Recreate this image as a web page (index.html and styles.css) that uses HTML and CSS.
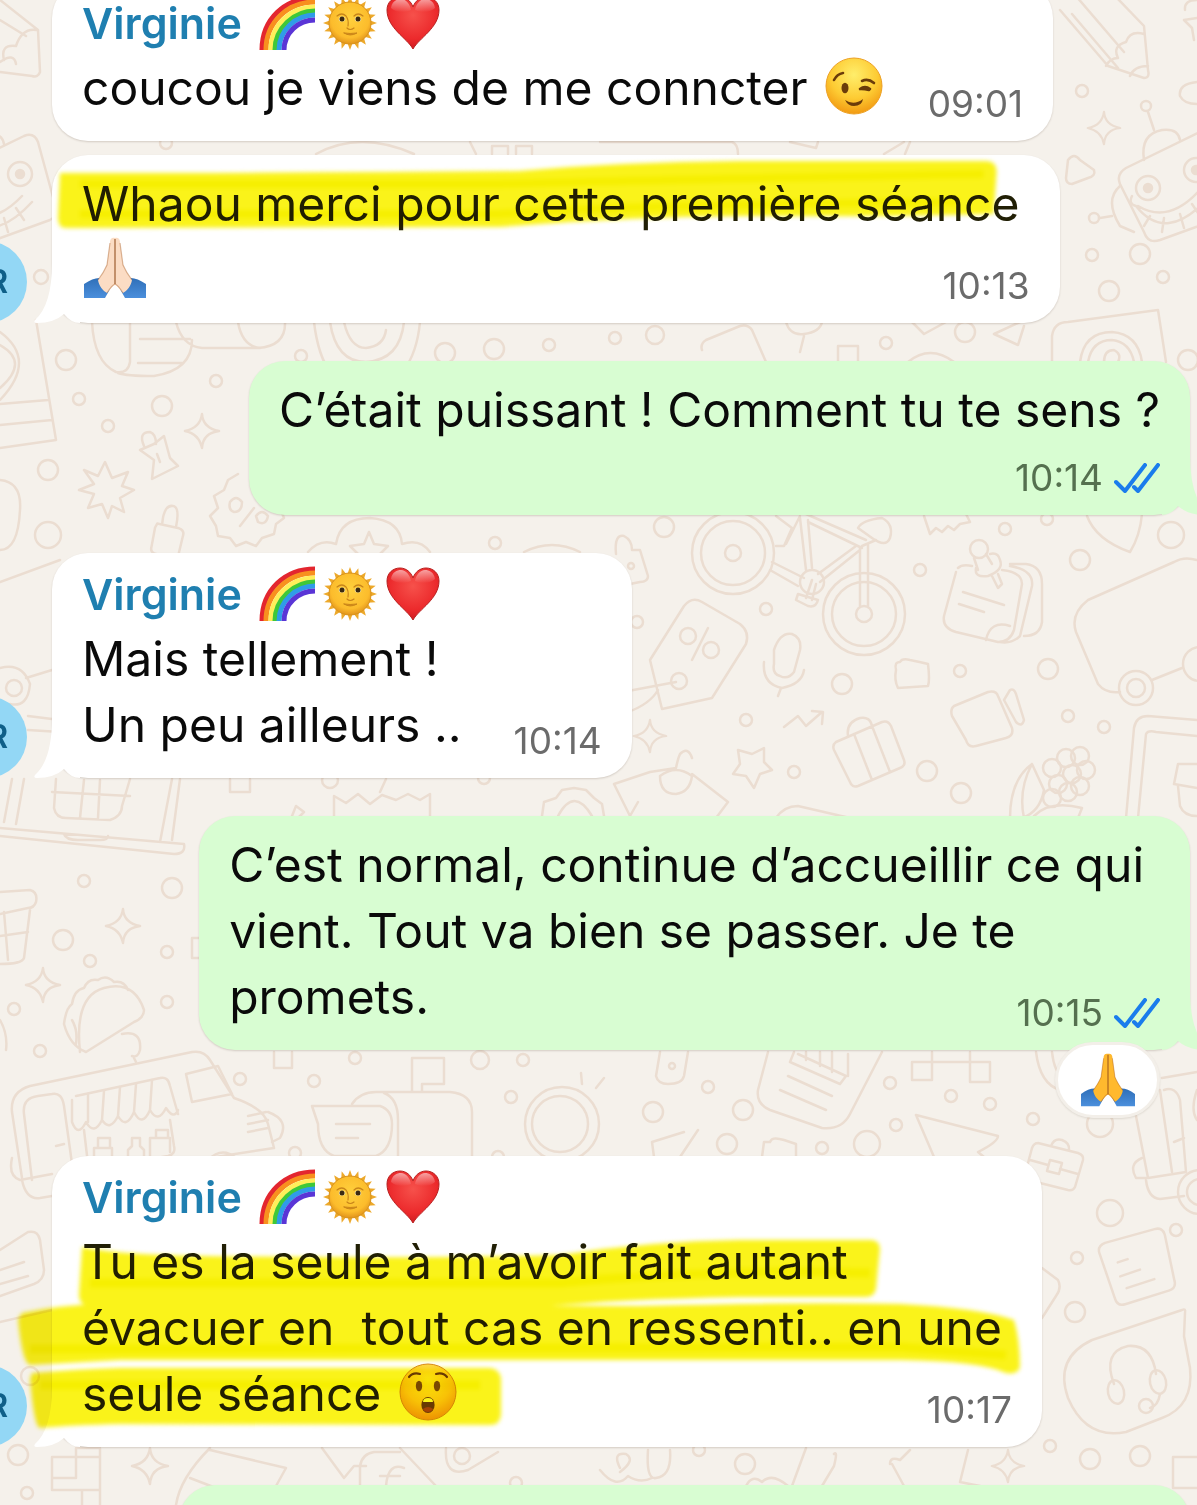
FILE: index.html
```html
<!DOCTYPE html>
<html lang="fr">
<head>
  <meta charset="UTF-8" />
  <meta name="viewport" content="width=device-width, initial-scale=1.0" />
  <title>Virginie</title>
  <link rel="stylesheet" href="styles.css">
</head>
<body>
  <!-- shared emoji and icons -->
  <svg class="sprite" width="0" height="0" aria-hidden="true">
    <defs>
      <radialGradient id="faceFill" cx="50%" cy="30%" r="70%">
        <stop offset="0" stop-color="#ffee6b" /><stop offset=".6" stop-color="#fdcb33" /><stop offset="1" stop-color="#f29a12" />
      </radialGradient>
      <radialGradient id="sunFill" cx="50%" cy="40%" r="60%">
        <stop offset="0" stop-color="#ffd13d" /><stop offset=".75" stop-color="#fcbc2c" /><stop offset="1" stop-color="#e2941c" />
      </radialGradient>
      <radialGradient id="heartFill" cx="50%" cy="35%" r="65%">
        <stop offset="0" stop-color="#f6514b" /><stop offset=".7" stop-color="#ec2a2c" /><stop offset="1" stop-color="#cf1a20" />
      </radialGradient>
      <linearGradient id="heartShine" x1="0" y1="0" x2="0" y2="1">
        <stop offset="0" stop-color="#fff" stop-opacity=".55" /><stop offset="1" stop-color="#fff" stop-opacity="0" />
      </linearGradient>
      <linearGradient id="sleeve" x1="0" y1="0" x2="0" y2="1">
        <stop offset="0" stop-color="#2f6fb8" /><stop offset="1" stop-color="#4b8fdc" />
      </linearGradient>
      <symbol id="rainbow" viewBox="0 0 56 56">
        <g fill="none" stroke-width="5">
          <path d="M3 55C3 24 26 3 56 3" stroke="#e3262f" />
          <path d="M7 55C7 27 29 7 56 7" stroke="#f8901e" />
          <path d="M12 55C12 30 32 12 56 12" stroke="#ffef5a" />
          <path d="M16 55C16 33 35 16 56 16" stroke="#3fc838" />
          <path d="M20 55C20 35 37 20 56 20" stroke="#2f9ce8" />
          <path d="M25 55C25 38 39 25 56 25" stroke="#5a35d6" />
        </g>
      </symbol>
      <symbol id="sun" viewBox="-28 -28 56 56">
        <g fill="#eda92b">
          <path id="ray" d="M0-27 3-19 19-3 27 0 19 3 3 19 0 27-3 19-19 3-27 0-19-3-3-19Z" />
          <use href="#ray" transform="rotate(18)" /><use href="#ray" transform="rotate(36)" />
          <use href="#ray" transform="rotate(54)" /><use href="#ray" transform="rotate(72)" />
        </g>
        <circle r="21" fill="url(#sunFill)" stroke="#d8921c" />
        <g fill="none" stroke="#c9851a" stroke-linecap="round">
          <path d="M-13-7Q-8-11-4-7Q-1-3-2 3M13-7Q8-11 4-7M-3 5Q0 8 4 5" stroke-width="1.2" />
          <path d="M-6 10Q0 14 7 10Q0 11-6 10" fill="#d98c14" />
        </g>
        <ellipse cx="-8" cy="-4" rx="3.2" ry="2.6" fill="#fff0b5" /><ellipse cx="8" cy="-4" rx="3.2" ry="2.6" fill="#fff0b5" />
        <circle cx="-8" cy="-4" r="2.5" fill="#3b2a12" /><circle cx="8" cy="-4" r="2.5" fill="#3b2a12" />
      </symbol>
      <symbol id="heart" viewBox="0 0 56 56">
        <path d="M28 54C22 43 2 33 2 15C2 7 8 2 15 2C21 2 26 6 28 12C30 6 35 2 41 2C48 2 54 7 54 15C54 33 34 43 28 54Z" fill="url(#heartFill)" stroke="#b8201f" />
        <path d="M6 13C7 6 12 4 16 4C21 4 25 9 26 15C20 18 11 18 6 13ZM30 15C31 9 35 4 40 4C44 4 49 6 50 13C45 18 36 18 30 15Z" fill="url(#heartShine)" />
      </symbol>
      <symbol id="pray" viewBox="0 0 62 62">
        <path d="M0 47Q10 40 17 41L26 52L21 61H0ZM62 47Q52 40 45 41L36 52L41 61H62Z" fill="url(#sleeve)" />
        <path d="M31 1C28 0 26 2 26 5L23 27C21 33 17 38 14 43C15 49 19 54 23 56L28 50Q31 46 34 50L39 56C43 54 47 49 48 43C45 38 41 33 39 27L36 5C36 2 34 0 31 1Z" fill="currentColor" />
        <path d="M31 2V47" fill="none" stroke="#8f4a1a" stroke-opacity=".65" stroke-width="1.6" />
        <path d="M26 6L23 28Q20 35 14 43M36 6L39 28Q42 35 48 43M31 47Q28 48 23 56M31 47Q34 48 39 56" fill="none" stroke="#a45a22" stroke-opacity=".4" stroke-width="1.2" />
      </symbol>
      <symbol id="wink" viewBox="0 0 58 58">
        <circle cx="29" cy="29" r="28" fill="url(#faceFill)" stroke="#eda125" />
        <ellipse cx="20" cy="31" rx="3.5" ry="5.2" fill="#6b3c0a" />
        <g fill="none" stroke="#6b3c0a" stroke-width="2.6" stroke-linecap="round">
          <path d="M9 23Q12 17 18 16M37 24Q43 21 49 26M35 32Q40 28 45 32M36 32Q40 32 44 33" />
        </g>
        <path d="M20 43Q29 49 38 42Q37 49 29 49Q23 49 20 43Z" fill="#6b3c0a" />
      </symbol>
      <symbol id="wow" viewBox="0 0 58 58">
        <circle cx="29" cy="29" r="28" fill="url(#faceFill)" stroke="#d98c18" />
        <ellipse cx="20" cy="23" rx="3.2" ry="5.2" fill="#7d4c0c" /><ellipse cx="38" cy="23" rx="3.2" ry="5.2" fill="#7d4c0c" />
        <path d="M10 14Q14 9 21 11M48 14Q44 9 37 11" fill="none" stroke="#6b3c0a" stroke-width="2.2" stroke-linecap="round" />
        <ellipse cx="29" cy="42" rx="6.6" ry="8" fill="#6b3c0a" />
        <path d="M24 39Q24 35 29 35Q34 35 34 39Z" fill="#fff" /><path d="M24 46Q29 42 34 46Q33 49 29 49Q25 49 24 46Z" fill="#a8452c" />
      </symbol>
      <symbol id="checks" viewBox="0 0 46 30">
        <path d="M2 19L11 28L31 2M20 24L24 28L44 2" fill="none" stroke="#1a7cec" stroke-width="4" stroke-linecap="round" stroke-linejoin="round" />
      </symbol>
      <symbol id="tailLeft" viewBox="0 0 46 60">
        <path d="M18 0Q18 42 1 57Q-1 60 3 60Q20 60 30 51Q37 60 46 60V0Z" fill="currentColor" />
      </symbol>
      <symbol id="tailRight" viewBox="0 0 46 60">
        <path d="M28 0Q28 42 45 57Q47 60 43 60Q26 60 16 51Q9 60 0 60V0Z" fill="currentColor" />
      </symbol>

      <!-- wallpaper doodles -->
      <symbol id="spark" viewBox="0 0 40 40"><path d="M20 2Q21 17 38 20Q21 22 20 38Q17 23 2 20Q18 17 20 2Z" /></symbol>
      <g id="robot">
        <path d="M12 60L86 24Q96 20 100 30L118 96Q120 104 112 108L46 132Q34 136 30 124L6 76Q2 66 12 60Z" />
        <path d="M30 52Q26 26 48 22Q64 20 66 32M40 22L34 4" /><circle cx="32" cy="-2" r="5" />
        <circle cx="34" cy="80" r="12" /><circle cx="34" cy="80" r="4" fill="#ebddd1" /><circle cx="82" cy="62" r="12" /><circle cx="82" cy="62" r="4" fill="#ebddd1" />
        <path d="M18 88Q14 96 22 98Q52 136 94 90M24 98Q54 116 84 84M36 108L30 118M50 110L48 124M66 106L70 120M78 96L86 108M6 78Q-10 92 6 118L20 124M-2 108L-14 110" />
        <circle cx="-20" cy="110" r="5" /><circle cx="26" cy="146" r="10" />
      </g>
      <g id="pencil">
        <path d="M0 10L48 66L84 78Q90 78 88 70L84 26L30-30M16-4L64 52M46 66Q50 58 58 58Q52 46 66 42Q70 30 84 34M12 14L58 68M70 76Q74 66 88 66" />
      </g>
      <g id="headset">
        <path d="M30 22L120-8Q124-10 123-5L122 18L128 50Q132 88 100 100L64 114Q24 122 6 80Q-8 40 30 22Z" />
        <path d="M52 66Q40 34 66 28Q90 26 94 56M98 76Q96 88 88 90" />
        <ellipse cx="54" cy="74" rx="8" ry="12" transform="rotate(-12 54 74)" /><ellipse cx="96" cy="64" rx="8" ry="12" transform="rotate(-12 96 64)" /><circle cx="84" cy="88" r="7" />
      </g>
      <g id="van">
        <path d="M10 138L0 72Q-2 52 18 46L180 12Q192 10 198 20L222 58Q252 68 256 84L262 108L80 136M20 140L12 74Q10 58 26 56L40 54Q50 52 52 66L62 138M64 56L148 38Q156 36 158 46L166 74M72 90L76 124Q78 130 86 128L156 116Q164 114 162 106L158 80" />
        <path d="M60 60L60 82Q66 98 74 82Q82 96 90 80Q98 92 106 76Q114 90 122 72Q130 88 138 70Q146 84 154 68Q162 80 166 70M76 54L76 82M92 51L90 80M108 47L106 76M124 44L122 72M140 40L138 70" />
        <path d="M174 34L206 26L220 54Q200 58 180 62ZM256 72Q278 80 268 98L260 102M236 76L254 72M236 84L256 80M236 92L256 88M82 124V108H100V124ZM86 108V98H98V108M116 120V110L120 106V98H128V106L132 110V118M138 116V98H158V112M144 98V90H156V98M44 106L52 104M196 120Q210 106 224 118" />
      </g>
      <g id="bag"><path d="M4 24L50 4Q56 2 59 8L72 42Q74 48 68 50L26 68Q20 70 18 64L2 32Q0 27 4 24ZM16 18Q14 4 28 0Q38-2 40 8M22 16L40 62M40 8L58 54" /></g>
      <g id="card"><path d="M8 6L58-6Q66-8 68 0L76 46Q78 54 70 56L26 68Q18 70 16 62L2 16Q0 9 8 6ZM20 26L30 23M22 40L42 34M28 52L56 44" /></g>
      <g id="lock"><path d="M4 18L26 22Q32 24 30 30L26 50Q24 54 18 52L2 48Q-2 46-1 42L2 22ZM9 18Q10-2 20 0Q26 2 23 20" /></g>
    </defs>
  </svg>

  <main class="chat">
    <svg class="wallpaper" viewBox="0 0 1197 1505" preserveAspectRatio="xMinYMin slice" aria-hidden="true">
      <g fill="none" stroke="#ebddd1" stroke-width="2.5" stroke-linecap="round" stroke-linejoin="round">
        <!-- upper left -->
        <path d="M0 0L38 30L40 72Q38 78 32 76L0 72M0 20L26 36M0 62Q14 52 16 64M4 60Q0 44 16 46Q22 28 36 30" />
        <use href="#robot" x="-62" y="112" />
        <circle cx="41" cy="277" r="7" /><circle cx="66" cy="360" r="10" /><circle cx="79" cy="399" r="6" /><circle cx="162" cy="406" r="10" />
        <circle cx="216" cy="381" r="6" /><circle cx="108" cy="426" r="6" /><circle cx="48" cy="470" r="10" /><circle cx="48" cy="535" r="13" />
        <path d="M0 448L56 440L36 320M0 404L48 400M0 425L52 420M0 345Q30 362 0 388M0 332Q38 360 0 400M0 480Q22 482 20 510Q18 550 0 550M0 582L60 560" />
        <path d="M92 322H130V362Q128 374 116 372Q94 362 92 322ZM140 339H190M138 363H182M118 373Q126 376 154 376Q192 370 192 340M176 322Q182 346 202 348H258Q286 346 285 322M238 322Q242 346 260 348M314 322Q322 390 366 392Q414 384 420 322M330 322Q336 362 366 362Q400 360 404 322M344 322Q350 348 366 348Q384 346 386 330" />
        <use href="#spark" x="182" y="412" width="40" height="38" />
        <path d="M140 450L154 444L164 436L170 458L178 466L152 479L154 460ZM144 446Q138 432 150 432Q156 434 156 444M157 454L160 462" />
        <path d="M105 462L112 478L128 472L122 486L134 490L120 498L124 512L112 506L108 518L102 504L88 508L94 494L79 490L94 484L84 470L98 476Z" />
        <use href="#lock" x="153" y="506" transform="rotate(2 170 530)" />
        <path d="M238 474L228 480L224 490L214 496L218 508L210 516L216 526L218 536L230 538L236 546L246 542L256 546L262 538L274 534L276 524L284 518L280 508M230 502Q236 494 242 502Q242 512 234 512Q228 510 230 502M254 508L240 526M256 516Q262 508 268 516Q266 526 258 522Z" />
        <path d="M308 552Q320 538 336 544Q340 518 370 518Q400 520 402 544Q420 538 430 552M369 532L374 544L388 546L378 556M369 532L364 544L350 546L360 556M524 552Q552 538 580 552" />
        <circle cx="495" cy="543" r="6" /><circle cx="445" cy="353" r="10" /><circle cx="494" cy="349" r="10" /><circle cx="549" cy="345" r="6" /><circle cx="301" cy="356" r="6" /><circle cx="615" cy="338" r="6" /><circle cx="655" cy="335" r="9" />
        <path d="M52 670L26 678M0 668Q22 662 30 684Q28 708 10 704" /><circle cx="14" cy="688" r="8" />
        <path d="M28 716L60 720M28 730L60 732" />

        <!-- between the first bubbles -->
        <circle cx="166" cy="143" r="6" /><path d="M316 154Q360 130 414 154M470 142L476 154M492 154V146H508V154M516 154V146H532V154M600 142H732Q738 144 738 154M790 142L816 148L818 142M884 154L904 142M905 154L910 142" />

        <!-- upper right -->
        <use href="#pencil" x="1060" y="0" />
        <path d="M1197 18L1184 20L1192 28L1194 40M1185 10Q1184 0 1197 0M1197 82Q1178 84 1180 96Q1184 104 1197 104" />
        <circle cx="1082" cy="91" r="6" /><use href="#spark" x="1086" y="110" width="36" height="36" />
        <path d="M1068 160Q1074 152 1080 160L1094 170Q1096 176 1088 178L1072 184Q1066 184 1066 178Z" />
        <use href="#robot" x="1114" y="108" />
        <circle cx="1092" cy="255" r="6" /><circle cx="1109" cy="291" r="10" /><circle cx="1163" cy="277" r="6" />
        <path d="M702 350Q700 344 706 340L740 326Q748 324 752 330L766 362M786 322Q790 336 804 334Q820 332 822 322M804 336L800 352M838 362V346H858V362M908 362Q930 344 954 362M912 322L924 334L946 322M994 334L1020 322M994 334L1018 345L1024 326M1052 362V336Q1054 322 1068 322L1158 310L1166 362M1080 362Q1084 332 1112 332Q1138 334 1142 362M1088 362Q1092 340 1112 340Q1130 342 1134 362M1104 362Q1104 350 1114 350Q1122 354 1118 362" />
        <circle cx="886" cy="343" r="6" /><circle cx="965" cy="332" r="10" /><circle cx="1188" cy="360" r="10" />

        <!-- bicycle -->
        <circle cx="733" cy="553" r="41" /><circle cx="733" cy="553" r="32" /><circle cx="733" cy="553" r="8" />
        <circle cx="864" cy="614" r="41" /><circle cx="864" cy="614" r="32" /><circle cx="864" cy="614" r="8" />
        <path d="M772 562L804 578M770 570L798 586M800 518L806 570M808 520L812 568M808 522L862 548M806 514L866 540M860 550L820 582M856 546L818 574M860 548V606M868 544V606M862 546L876 540M800 516L786 544M776 516L792 528L784 546H776M858 528Q862 520 882 518Q894 524 890 538Q886 548 872 538Z" />
        <circle cx="812" cy="582" r="12" /><path d="M812 580L806 598M816 584L812 600M798 594L818 600Q816 608 808 606L796 600Z" />
        <!-- tag -->
        <path d="M684 606Q692 596 702 602L740 624Q750 632 746 644L712 698L662 709L650 660ZM708 628L692 660M628 691L676 682M628 712Q650 704 658 690" />
        <circle cx="688" cy="636" r="8" /><circle cx="711" cy="650" r="8" /><circle cx="679" cy="681" r="8" />
        <path d="M774 650Q780 632 792 634Q802 638 800 650L794 672Q788 680 780 676Q772 674 774 664ZM764 662Q762 684 782 688Q802 684 804 670M781 688L778 696" />
        <path d="M616 554Q614 534 624 536Q632 540 632 550L640 550L648 576Q648 582 640 582L630 584" />
        <circle cx="631" cy="566" r="3" /><circle cx="664" cy="527" r="10" /><circle cx="637" cy="622" r="6" /><circle cx="766" cy="609" r="6" /><circle cx="842" cy="684" r="10" /><circle cx="746" cy="720" r="6" />
        <circle cx="920" cy="570" r="6" /><circle cx="1005" cy="529" r="6" /><circle cx="1047" cy="519" r="6" /><circle cx="1080" cy="560" r="10" /><circle cx="1171" cy="535" r="13" />
        <circle cx="960" cy="671" r="6" /><circle cx="1048" cy="669" r="10" /><circle cx="1068" cy="716" r="6" /><circle cx="1104" cy="727" r="6" />
        <path d="M924 516L930 534L936 528L942 532L948 526L954 530L960 524L970 522L966 514M1087 516Q1096 540 1130 552Q1140 536 1142 514" />
        <!-- notes with pin -->
        <path d="M958 568Q962 564 972 566M1002 570Q1022 572 1022 584L1014 630Q1010 642 998 642L956 632Q942 628 944 616L956 572M1010 566Q1034 570 1032 586L1020 636Q1012 644 1000 642M1010 564H1026Q1042 566 1042 584V622Q1040 636 1024 636M963 592L1004 605M959 604L984 612M986 640Q990 620 1010 626" />
        <circle cx="979" cy="549" r="9" /><path d="M974 558L978 570M986 554L992 564M976 568Q974 578 988 576Q1004 570 1000 560Q998 552 990 554M992 576L998 588L1002 584L998 574" />
        <path d="M896 670Q894 662 900 662Q902 658 910 660Q920 662 928 664Q930 680 928 686L898 688Q894 680 896 670Z" />
        <path d="M954 706L988 692Q996 690 998 696L1012 728Q1014 736 1006 738L976 746Q968 748 966 740L952 716Q950 709 954 706ZM1004 700L1010 690Q1014 688 1016 694L1024 720Q1022 728 1016 722Z" />
        <use href="#bag" x="832" y="718" />
        <path d="M784 727L798 716L806 726L822 712M812 711L823 712L822 724" />
        <use href="#spark" x="632" y="718" width="36" height="36" />
        <path d="M738 750L752 754L764 748L764 762L772 770L760 774L754 788L746 776L733 774L740 764Z" />
        <circle cx="794" cy="772" r="6" /><circle cx="927" cy="771" r="10" /><circle cx="961" cy="793" r="10" />
        <path d="M614 784L650 772L676 768Q678 758 680 754Q688 746 692 758M692 774L728 802L716 818M614 784L630 816L638 802M660 776Q660 794 676 794Q690 792 692 776Q676 764 660 776M776 818Q784 806 798 806L850 818" />
        <!-- corn -->
        <path d="M1010 818Q1010 780 1032 764L1044 790Q1040 812 1022 818M1032 764Q1018 790 1024 818M1034 816Q1050 800 1082 808L1078 818" />
        <g><circle cx="1052" cy="768" r="9" /><circle cx="1066" cy="758" r="9" /><circle cx="1080" cy="756" r="9" /><circle cx="1058" cy="784" r="9" /><circle cx="1072" cy="774" r="9" /><circle cx="1086" cy="770" r="9" /><circle cx="1052" cy="798" r="9" /><circle cx="1068" cy="792" r="9" /><circle cx="1080" cy="786" r="9" /></g>
        <path d="M1197 560Q1184 556 1174 562L1088 600Q1070 614 1076 632L1098 684Q1106 694 1120 692M1152 680L1182 668" /><circle cx="1136" cy="688" r="17" /><circle cx="1136" cy="688" r="9" /><circle cx="1200" cy="664" r="17" />
        <path d="M1126 818L1134 728Q1136 716 1148 716L1197 720M1138 818L1146 734Q1148 730 1156 732L1197 736M1197 764H1178L1174 784L1197 788M1178 786L1180 806Q1184 816 1197 816" />

        <!-- middle left -->
        <path d="M0 828L184 844Q186 854 174 854L0 836M4 822L12 779M16 824L24 779M56 779L54 808Q56 818 66 818L110 820Q122 816 122 806L130 779M52 792L130 796M84 780L80 818M100 780L98 818M172 779L160 842M180 779L172 840M64 834Q66 840 78 840H100Q108 840 108 836" />
        <path d="M230 779V792H250V779M334 816V796L346 803L358 794L370 804L382 795L396 800L408 794L420 800L430 794V818M380 792L386 779M292 816L296 806L304 812L298 818" />
        <path d="M542 816L544 802L556 798L562 790L574 788L586 790L594 798L602 804L604 816M558 816Q574 786 592 816" />
        <circle cx="330" cy="780" r="8" /><circle cx="484" cy="778" r="6" />
        <circle cx="84" cy="881" r="6" /><circle cx="172" cy="888" r="10" /><circle cx="63" cy="940" r="10" /><circle cx="90" cy="961" r="6" /><circle cx="167" cy="952" r="6" /><circle cx="14" cy="1009" r="6" /><circle cx="167" cy="1002" r="6" /><circle cx="40" cy="1051" r="6" />
        <use href="#spark" x="104" y="907" width="38" height="38" /><use href="#spark" x="24" y="966" width="38" height="38" />
        <path d="M0 892L30 890Q38 892 36 902Q34 908 28 908L0 914M30 910L24 958Q22 964 0 964M0 936L28 932M4 912L8 960M192 938H200M192 938V958H200M0 1020Q8 1034 6 1050" />
        <!-- taco -->
        <path d="M80 1052Q74 996 104 988Q134 980 144 1010Q144 1018 134 1022L86 1052Q70 1046 64 1024Q66 1008 72 1004Q74 990 84 988Q88 978 98 980Q106 974 114 982Q124 980 128 990M72 1020Q78 1030 76 1044M122 1034Q142 1030 140 1050Q138 1058 132 1056M134 1058L136 1062" />
        <use href="#van" x="12" y="1040" />
        <path d="M274 1052V1068H292V1052M412 1092V1058H444V1084H422V1092M352 1104Q360 1092 376 1092H450Q472 1094 472 1112V1157M384 1093Q398 1098 398 1120V1157M312 1106H380Q392 1110 392 1124Q392 1150 376 1156H334Q318 1150 318 1124ZM336 1124H370M336 1138H358" />
        <circle cx="240" cy="1079" r="6" /><circle cx="314" cy="1081" r="6" /><circle cx="355" cy="1058" r="6" /><circle cx="480" cy="1060" r="9" /><circle cx="523" cy="1060" r="6" /><circle cx="511" cy="1097" r="6" /><circle cx="295" cy="1153" r="6" /><circle cx="498" cy="1157" r="6" />
        <circle cx="562" cy="1124" r="37" /><circle cx="560" cy="1124" r="28" /><path d="M581 1073L582 1084M604 1078L596 1088" />

        <!-- middle right -->
        <path d="M660 1052L656 1076Q658 1084 668 1084Q682 1084 684 1076L688 1052M768 1052L758 1090Q756 1104 770 1110L822 1128Q842 1130 850 1114L882 1052M794 1052L790 1062L840 1084L846 1076L798 1054M806 1052V1060M820 1052V1066M832 1052V1072M848 1054V1076M788 1076L832 1096M780 1090L826 1110" />
        <circle cx="672" cy="1066" r="3" /><circle cx="708" cy="1087" r="6" /><circle cx="653" cy="1112" r="10" /><circle cx="743" cy="1110" r="10" /><circle cx="727" cy="1144" r="10" /><circle cx="890" cy="1083" r="6" /><circle cx="896" cy="1125" r="6" /><circle cx="867" cy="1144" r="13" /><circle cx="951" cy="1096" r="6" /><circle cx="990" cy="1104" r="6" /><circle cx="1033" cy="1119" r="6" /><circle cx="822" cy="1148" r="6" />
        <path d="M912 1062H932V1080H912ZM932 1062H990V1082H970V1062M932 1052V1062M970 1052V1062M916 1115L998 1136Q998 1142 978 1152L984 1157M916 1115L934 1157M654 1157L652 1142L684 1132M698 1130L680 1157M762 1157L764 1142H770Q772 1136 784 1140L796 1144V1157" />
        <!-- briefcase -->
        <path d="M1038 1143L1078 1153Q1084 1155 1083 1160L1075 1187Q1073 1191 1068 1190L1028 1180M1038 1143Q1034 1143 1032 1148L1024 1178M1051 1146Q1054 1138 1062 1140Q1070 1143 1069 1150M1030 1160L1048 1165M1060 1169L1078 1174M1050 1160L1062 1163L1059 1174L1047 1171Z" />
        <path d="M1036 1052Q1040 1084 1060 1090M1052 1052Q1054 1072 1064 1080M1162 1078L1197 1072M1136 1116L1148 1178L1186 1172L1180 1100Q1176 1086 1164 1090M1142 1158Q1128 1164 1136 1178H1146M1146 1180Q1148 1198 1160 1199L1184 1196M1160 1090L1172 1172M1197 1090Q1190 1110 1197 1120M1174 1142L1184 1138" />
        <circle cx="1100" cy="1124" r="13" /><circle cx="1200" cy="1192" r="22" /><circle cx="1200" cy="1192" r="13" />
        <circle cx="1110" cy="1213" r="13" /><circle cx="1176" cy="1230" r="6" /><circle cx="1077" cy="1258" r="6" /><circle cx="1075" cy="1312" r="10" />
        <use href="#card" x="1098" y="1236" transform="rotate(-2 1130 1270)" />
        <use href="#headset" x="1062" y="1318" />
        <path d="M1042 1268L1058 1280Q1062 1288 1056 1296L1042 1318" />
        <circle cx="1050" cy="1446" r="6" /><circle cx="1090" cy="1459" r="10" /><circle cx="1140" cy="1456" r="10" />

        <!-- bottom -->
        <path d="M0 1250L28 1232Q38 1230 40 1240L44 1270Q44 1280 34 1284L0 1296M0 1270L24 1262M0 1284L28 1276M0 1322L52 1310M12 1158Q8 1176 20 1180L52 1174M22 1180Q26 1200 40 1198L52 1196" />
        <circle cx="18" cy="1455" r="10" /><circle cx="27" cy="1493" r="6" /><circle cx="30" cy="1376" r="9" />
        <path d="M52 1457H100V1490H52ZM76 1448V1478H52M76 1448H100V1457M82 1490V1505M100 1490V1505" />
        <use href="#spark" x="130" y="1446" width="40" height="40" />
        <path d="M210 1448Q180 1478 176 1505M210 1450L286 1468L276 1486M190 1478L216 1488M322 1448L344 1478L354 1466H366M360 1486V1466Q362 1454 374 1452H400M400 1448L436 1486M404 1468Q388 1462 386 1486M380 1476H400M446 1448Q444 1478 468 1470L498 1452" />
        <circle cx="462" cy="1456" r="8" /><circle cx="516" cy="1483" r="6" />
        <path d="M600 1470Q616 1490 628 1476Q640 1484 652 1478M620 1468Q612 1452 626 1454Q636 1460 620 1472M648 1450Q646 1480 656 1478Q672 1476 670 1450M806 1448L792 1486M834 1454Q838 1450 834 1466L822 1486M746 1486Q752 1474 762 1482Q772 1472 788 1486M890 1464Q890 1456 900 1460L910 1450M892 1464L904 1486M968 1450L960 1482L980 1486" />
        <circle cx="699" cy="1450" r="6" /><circle cx="745" cy="1464" r="10" /><use href="#spark" x="990" y="1448" width="36" height="36" />
        <path d="M1197 1457H1173V1488H1197" />
      </g>
    </svg>

    <ol class="messages">
      <li class="row incoming">
        <span class="avatar-space"></span>
        <article class="bubble">
          <h2 class="name">Virginie
            <span class="name-emoji"><svg role="img" aria-label="arc-en-ciel"><use href="#rainbow" /></svg><svg role="img" aria-label="soleil"><use href="#sun" /></svg><svg role="img" aria-label="cœur"><use href="#heart" /></svg></span>
          </h2>
          <div class="body">
            <p class="text">coucou je viens de me conncter <svg class="emoji" role="img" aria-label="clin d'œil"><use href="#wink" /></svg><span class="meta-space"></span></p>
            <div class="meta"><time>09:01</time></div>
          </div>
        </article>
      </li>

      <li class="row incoming grouped">
        <span class="avatar">VR</span>
        <article class="bubble">
          <svg class="tail"><use href="#tailLeft" /></svg>
          <div class="body">
            <p class="text wrapped"><mark>Whaou merci pour cette première séance</mark><br><svg class="emoji hands light" role="img" aria-label="mains jointes"><use href="#pray" /></svg></p>
            <div class="meta"><time>10:13</time></div>
          </div>
          <svg class="marker" viewBox="0 0 1009 168" preserveAspectRatio="none" aria-hidden="true">
            <g transform="translate(-52 -155)">
              <path d="M60 173Q300 173 520 171Q620 162 740 161H985Q998 160 998 172L995 214Q900 217 750 216Q620 217 500 227L66 228Q58 228 58 218Z" fill="#faf31a" />
              <path d="M80 184H500Q640 180 985 174M80 214H500Q640 204 960 202" stroke="#f6ef00" stroke-width="8" fill="none" />
            </g>
          </svg>
        </article>
      </li>

      <li class="row outgoing">
        <article class="bubble">
          <svg class="tail"><use href="#tailRight" /></svg>
          <div class="body stacked">
            <p class="text">C’était puissant ! Comment tu te sens ?</p>
            <div class="meta"><time>10:14</time><svg class="checks" role="img" aria-label="lu"><use href="#checks" /></svg></div>
          </div>
        </article>
      </li>

      <li class="row incoming">
        <span class="avatar">VR</span>
        <article class="bubble">
          <svg class="tail"><use href="#tailLeft" /></svg>
          <h2 class="name">Virginie
            <span class="name-emoji"><svg role="img" aria-label="arc-en-ciel"><use href="#rainbow" /></svg><svg role="img" aria-label="soleil"><use href="#sun" /></svg><svg role="img" aria-label="cœur"><use href="#heart" /></svg></span>
          </h2>
          <div class="body">
            <p class="text">Mais tellement !<br>Un peu ailleurs ..<span class="meta-space"></span></p>
            <div class="meta"><time>10:14</time></div>
          </div>
        </article>
      </li>

      <li class="row outgoing">
        <article class="bubble">
          <svg class="tail"><use href="#tailRight" /></svg>
          <div class="body">
            <p class="text wrapped">C’est normal, continue d’accueillir ce qui<br>vient. Tout va bien se passer. Je te<br>promets.</p>
            <div class="meta"><time>10:15</time><svg class="checks" role="img" aria-label="lu"><use href="#checks" /></svg></div>
          </div>
        </article>
        <button class="reaction" type="button" aria-label="Réaction : mains jointes"><svg class="hands"><use href="#pray" /></svg></button>
      </li>

      <li class="row incoming">
        <span class="avatar">VR</span>
        <article class="bubble">
          <svg class="tail"><use href="#tailLeft" /></svg>
          <h2 class="name">Virginie
            <span class="name-emoji"><svg role="img" aria-label="arc-en-ciel"><use href="#rainbow" /></svg><svg role="img" aria-label="soleil"><use href="#sun" /></svg><svg role="img" aria-label="cœur"><use href="#heart" /></svg></span>
          </h2>
          <div class="body">
            <p class="text wrapped"><mark>Tu es la seule à m’avoir fait autant<br>évacuer en&nbsp; tout cas en ressenti.. en une<br>seule séance</mark> <svg class="emoji" role="img" aria-label="étonné"><use href="#wow" /></svg></p>
            <div class="meta"><time>10:17</time></div>
          </div>
          <svg class="marker" viewBox="0 0 990 291" preserveAspectRatio="none" aria-hidden="true">
            <g transform="translate(-52 -1157)">
              <path d="M82 1248Q120 1256 200 1257Q420 1260 560 1256Q650 1242 740 1241H872Q880 1242 880 1250L876 1290Q874 1298 866 1298H740Q620 1300 540 1308H90Q79 1306 79 1296Z" fill="#faf31a" />
              <path d="M22 1314Q60 1306 100 1305L640 1307Q800 1303 900 1305Q980 1309 1014 1321Q1020 1340 1020 1368Q1018 1376 1006 1374Q980 1362 900 1361H120L30 1366Q22 1364 18 1320Z" fill="#faf31a" />
              <path d="M32 1374Q80 1370 120 1369H490Q500 1370 501 1380V1416Q500 1426 490 1426L120 1425Q70 1426 40 1429Q34 1428 30 1380Z" fill="#faf31a" />
              <path d="M90 1284H560Q700 1270 870 1274M30 1350L900 1348L1006 1356M40 1386H480" stroke="#f6ef00" stroke-width="9" fill="none" />
            </g>
          </svg>
        </article>
      </li>

      <li class="row outgoing">
        <article class="bubble next"></article>
      </li>
    </ol>
  </main>
</body>
</html>
```
FILE: styles.css
```css
* {
  box-sizing: border-box;
}
body {
  margin: 0;
  background: #f5f1eb;
  color: #0a0a0a;
  font-family: Inter, "Liberation Sans", sans-serif;
}
.sprite {
  position: absolute;
}
.chat {
  position: relative;
  height: 100vh;
  overflow: hidden;
}
.wallpaper {
  position: absolute;
  top: 0;
  left: 0;
  width: 100%;
  height: 100%;
}
.messages {
  position: relative;
  display: flex;
  flex-direction: column;
  gap: 38px;
  margin: -18px 0 0;
  padding: 0 7px 0 0;
  list-style: none;
}
.row {
  display: flex;
}
.incoming {
  align-items: flex-end;
  gap: 25px;
  margin-left: -55px;
}
.outgoing {
  flex-direction: column;
  align-items: flex-end;
}
.grouped {
  margin-top: -24px;
}

.avatar, .avatar-space {
  flex: none;
  width: 82px;
}
.avatar {
  height: 82px;
  border-radius: 50%;
  background: #93d7f5;
  color: #0f5f88;
  font-size: 32px;
  font-weight: 600;
  line-height: 82px;
  text-align: center;
}

.bubble {
  position: relative;
  padding: 16px 30px 20px;
  border-radius: 36px;
  background: #fff;
  color: #0a0a0a;
  box-shadow: 0 1px 2px rgba(60, 40, 20, 0.18);
}
.outgoing .bubble {
  background: #d8fdd2;
}
.bubble.next {
  width: 85%;
  height: 120px;
}
.tail {
  position: absolute;
  bottom: 0;
  left: -18px;
  width: 46px;
  height: 60px;
  color: #fff;
}
.outgoing .tail {
  left: auto;
  right: -18px;
  color: #d8fdd2;
}

.name {
  display: flex;
  align-items: center;
  gap: 17px;
  height: 50px;
  margin: 0 0 7px;
  color: #1f7fb0;
  font-size: 43px;
  font-weight: 600;
  line-height: 50px;
}
.name-emoji {
  display: flex;
  gap: 7px;
}
.name-emoji svg {
  width: 56px;
  height: 56px;
}

.body {
  display: grid;
}
.text {
  grid-area: 1 / 1;
  margin: 0;
  font-size: 48px;
  line-height: 66px;
  white-space: nowrap;
}
.text.wrapped {
  padding-right: 10px;
}
.outgoing .text.wrapped {
  padding-right: 16px;
}
.text mark {
  background: none;
  color: #211f05;
}
.emoji {
  width: 58px;
  height: 58px;
  margin-left: 4px;
  vertical-align: -10px;
}
.hands {
  width: 62px;
  height: 62px;
  color: #ffb92e;
}
.emoji.hands {
  margin-left: 2px;
  vertical-align: -12px;
}
.hands.light {
  color: #fbdcc4;
}
.meta-space {
  display: inline-block;
  width: 140px;
}
.meta {
  grid-area: 1 / 1;
  place-self: end;
  display: flex;
  align-items: center;
  gap: 11px;
  color: #6b6b6b;
  font-size: 37px;
  line-height: 34px;
}
.outgoing .meta {
  color: #55704f;
}
.stacked .meta {
  grid-area: 2 / 1;
  padding-top: 18px;
}
.checks {
  width: 46px;
  height: 30px;
}

.marker {
  position: absolute;
  top: 0;
  left: 0;
  width: 100%;
  height: 100%;
  overflow: visible;
  filter: blur(2px);
  mix-blend-mode: multiply;
  pointer-events: none;
}

.reaction {
  position: relative;
  display: flex;
  align-items: center;
  justify-content: center;
  width: 105px;
  height: 76px;
  margin: -8px 30px 0 0;
  padding: 0;
  border: 3px solid #f3efe9;
  border-radius: 38px;
  background: #fff;
  box-shadow: 0 1px 2px rgba(60, 40, 20, 0.12);
}
.reaction .hands {
  width: 54px;
  height: 54px;
}
```
